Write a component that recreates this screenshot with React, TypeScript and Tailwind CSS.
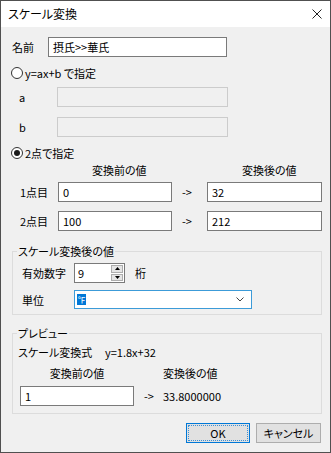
import React from "react";

const Radio = ({ checked, label }: { checked?: boolean; label: string }) => (
  <div className="flex items-center h-[16px] gap-[2px]">
    <span className="w-[12px] h-[12px] rounded-full border border-[#333] bg-white flex items-center justify-center">
      {checked && <span className="w-[6px] h-[6px] rounded-full bg-[#1a1a1a]" />}
    </span>
    <span>{label}</span>
  </div>
);

const TextBox = ({ value, className }: { value?: string; className: string }) => (
  <div className={`h-[20px] border border-[#7a7a7a] bg-white flex items-center pl-[4px] ${className}`}>
    {value}
  </div>
);

const Group = ({ title, className, children }: { title: string; className: string; children: React.ReactNode }) => (
  <div className={`relative ml-[11px] w-[310px] border border-[#dcdcdc] ${className}`}>
    <span className="absolute left-[4px] top-[-8px] bg-[#f0f0f0] px-[1px] leading-[14px]">{title}</span>
    {children}
  </div>
);

export default function App() {
  return (
    <div className="w-[331px] h-[453px] border border-[#505050] bg-[#f0f0f0] flex flex-col text-[11px] leading-[14px] text-black font-['Noto_Sans_CJK_JP','Noto_Sans',sans-serif] [font-feature-settings:'palt']">
      <div className="h-[26px] bg-white flex items-center justify-between pl-[7px] pr-[8px] text-[12px]">
        <span>スケール変換</span>
        <svg width="10" height="10" viewBox="0 0 10 10" className="mb-[1px]">
          <path d="M0.5 0.5 L9.5 9.5 M9.5 0.5 L0.5 9.5" stroke="#222" strokeWidth="1" />
        </svg>
      </div>

      {/* name */}
      <div className="mt-[10px] ml-[11px] flex items-center">
        <span className="w-[36px]">名前</span>
        <TextBox value="摂氏>>華氏" className="w-[179px]" />
      </div>

      <div className="mt-[8px] ml-[10px]">
        <Radio label="y=ax+b で指定" />
      </div>

      <div className="mt-[6px] ml-[18px] flex items-center">
        <span className="w-[38px]">a</span>
        <div className="w-[171px] h-[20px] border border-[#cccccc] bg-[#f0f0f0]" />
      </div>
      <div className="mt-[10px] ml-[18px] flex items-center">
        <span className="w-[38px]">b</span>
        <div className="w-[171px] h-[20px] border border-[#cccccc] bg-[#f0f0f0]" />
      </div>

      <div className="mt-[8px] ml-[10px]">
        <Radio checked label="2点で指定" />
      </div>

      <div className="mt-[2px] ml-[57px] flex">
        <span className="w-[149px] pl-[34px]">変換前の値</span>
        <span className="pl-[35px]">変換後の値</span>
      </div>

      {[
        ["1点目", "0", "32"],
        ["2点目", "100", "212"],
      ].map(([label, a, b], i) => (
        <div key={label} className={`${i === 0 ? "mt-[5px]" : "mt-[9px]"} ml-[19px] flex items-center`}>
          <span className="w-[38px]">{label}</span>
          <TextBox value={a} className="w-[114px]" />
          <span className="w-[35px] pl-[10px]">-&gt;</span>
          <TextBox value={b} className="w-[115px]" />
        </div>
      ))}

      <Group title="スケール変換後の値" className="mt-[20px] h-[64px] pt-[11px] pl-[9px]">
        <div className="flex items-center">
          <span className="w-[52px]">有効数字</span>
          <div className="h-[20px] w-[51px] border border-[#7a7a7a] bg-white flex">
            <span className="flex-1 pl-[3px] flex items-center">9</span>
            <div className="w-[13px] flex flex-col gap-[1px] p-[1px] pl-0">
              <div className="flex-1 bg-[#e5e5e5] border border-[#adadad] flex items-center justify-center">
                <svg width="5" height="3" viewBox="0 0 5 3"><path d="M0 3 L2.5 0 L5 3Z" fill="#000" /></svg>
              </div>
              <div className="flex-1 bg-[#e5e5e5] border border-[#adadad] flex items-center justify-center">
                <svg width="5" height="3" viewBox="0 0 5 3"><path d="M0 0 L2.5 3 L5 0Z" fill="#000" /></svg>
              </div>
            </div>
          </div>
          <span className="ml-[10px]">桁</span>
        </div>
        <div className="mt-[7px] flex items-center">
          <span className="w-[52px]">単位</span>
          <div className="w-[178px] h-[19px] border border-[#3c9bd8] bg-white flex items-center justify-between pl-[2px] pr-[7px]">
            <span className="w-[9px] h-[11px] bg-[#0078d7] text-white text-[8px] leading-[11px] flex items-center justify-center overflow-hidden">℉</span>
            <svg width="8" height="5" viewBox="0 0 8 5">
              <path d="M0.5 0.5 L4 4 L7.5 0.5" stroke="#444" fill="none" strokeWidth="1" />
            </svg>
          </div>
        </div>
      </Group>

      <Group title="プレビュー" className="mt-[18px] h-[81px] pt-[11px] pl-[5px]">
        <div className="flex">
          <span className="w-[87px]">スケール変換式</span>
          <span>y=1.8x+32</span>
        </div>
        <div className="mt-[7px] ml-[2px] flex">
          <span className="w-[114px] text-center">変換前の値</span>
          <span className="pl-[29px]">変換後の値</span>
        </div>
        <div className="mt-[6px] ml-[2px] flex items-center">
          <TextBox value="1" className="w-[114px]" />
          <span className="w-[29px] pl-[10px]">-&gt;</span>
          <span>33.8000000</span>
        </div>
      </Group>

      <div className="mt-[9px] ml-[185px] flex gap-[6px]">
        <div className="w-[64px] h-[20px] bg-[#e1e1e1] border border-[#0078d7] p-[1px]">
          <div className="w-full h-full border border-dotted border-[#3a8fd6] flex items-center justify-center">OK</div>
        </div>
        <div className="w-[65px] h-[20px] bg-[#e1e1e1] border border-[#adadad] flex items-center justify-center">
          キャンセル
        </div>
      </div>
    </div>
  );
}
